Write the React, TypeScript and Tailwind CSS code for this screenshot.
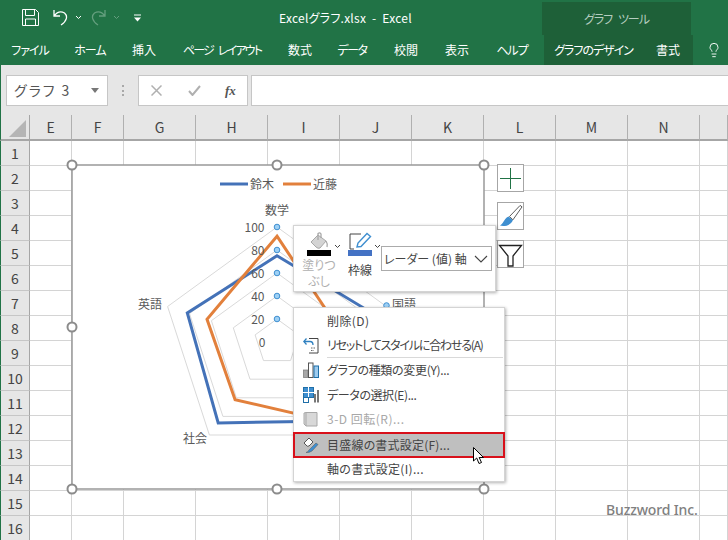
import { Lightbulb } from "lucide-react";

const columns = ["E", "F", "G", "H", "I", "J", "K", "L", "M", "N", ""];
const rows = Array.from({ length: 16 }, (_, i) => i + 1);
const tabs = [
  { label: "ファイル", width: "w-[60px]", track: "tracking-[-1px]" },
  { label: "ホーム", width: "w-[60px]", track: "tracking-[-1px]" },
  { label: "挿入", width: "w-[48px]", track: "" },
  { label: "ページ レイアウト", width: "w-[108px]", track: "tracking-[-1.8px] [word-spacing:4px]" },
  { label: "数式", width: "w-[48px]", track: "" },
  { label: "データ", width: "w-[56px]", track: "tracking-[-1.5px]" },
  { label: "校閲", width: "w-[52px]", track: "" },
  { label: "表示", width: "w-[50px]", track: "" },
  { label: "ヘルプ", width: "w-[60px]", track: "tracking-[-1px]" },
];

const CENTER_X = 277;
const CENTER_Y = 342;
const RADIUS = 115;

function pt(axis: number, v: number) {
  const a = (axis * 72 * Math.PI) / 180;
  return [CENTER_X + Math.sin(a) * RADIUS * v, CENTER_Y - Math.cos(a) * RADIUS * v];
}

function poly(vals: number[]) {
  return vals.map((v, i) => pt(i, v).map((n) => n.toFixed(1)).join(",")).join(" ");
}

function RadarChart() {
  const handles = [
    [72, 165], [277, 165], [484, 165],
    [72, 327], [484, 327],
    [72, 489], [277, 489], [484, 489],
  ];
  return (
    <svg viewBox="72 165 412 324" className="absolute left-[72px] top-[165px] w-[412px] h-[324px] overflow-visible">
      <rect x="72" y="165" width="412" height="324" fill="#fff" stroke="#999" strokeWidth="1.5" />
      {[0.2, 0.4, 0.6, 0.8, 1].map((v) => (
        <polygon key={v} points={poly([v, v, v, v, v])} fill="none" stroke="#d9d9d9" strokeWidth="1" />
      ))}
      <polygon points={poly([0.75, 0.85, 0.85, 0.87, 0.82])} fill="none" stroke="#4472b8" strokeWidth="3" />
      <polygon points={poly([0.92, 0.53, 0.87, 0.62, 0.64])} fill="none" stroke="#e2803c" strokeWidth="3" />
      {[1, 0.8, 0.6, 0.4, 0.2].map((v) => (
        <circle key={v} cx={CENTER_X} cy={CENTER_Y - RADIUS * v} r="2.8" fill="#9dd0f5" stroke="#3f8fd0" strokeWidth="1" />
      ))}
      <circle cx="386.5" cy="305.5" r="2.8" fill="#9dd0f5" stroke="#3f8fd0" strokeWidth="1" />
      <line x1="220" y1="184" x2="248" y2="184" stroke="#4472b8" strokeWidth="3" />
      <line x1="283" y1="184" x2="311" y2="184" stroke="#e2803c" strokeWidth="3" />
      <g fill="#595959" fontSize="12">
        <text x="250" y="188.5">鈴木</text>
        <text x="313" y="188.5">近藤</text>
        <text x="265" y="214.5">数学</text>
        <text x="138" y="309">英語</text>
        <text x="183" y="443">社会</text>
        <text x="392" y="309">国語</text>
        {[100, 80, 60, 40, 20, 0].map((n, i) => (
          <text key={n} x={n === 0 ? 265.5 : 264.5} y={231.5 + i * 23} textAnchor="end">{n}</text>
        ))}
      </g>
      {handles.map(([x, y]) => (
        <circle key={`${x}-${y}`} cx={x} cy={y} r="4.5" fill="#fff" stroke="#8c8c8c" strokeWidth="2" />
      ))}
    </svg>
  );
}

function SideButtons() {
  return (
    <div className="absolute left-[497px] top-[164px] flex flex-col gap-[10px]">
      <div className="w-[27px] h-[28px] bg-white border border-[#a6a6a6] flex items-center justify-center">
        <svg viewBox="0 0 21 21" className="w-[21px] h-[21px]"><path d="M10.5 0v21M0 10.5h21" stroke="#217346" strokeWidth="1" /></svg>
      </div>
      <div className="w-[27px] h-[28px] bg-white border border-[#a6a6a6] flex items-center justify-center">
        <svg viewBox="0 0 26 26" className="w-[26px] h-[26px]">
          <path d="M12 13.5 L23 2 L25 3.5 L15.5 17Z" fill="#fff" stroke="#555" strokeWidth="1" />
          <path d="M11 13.5 C8 14.5 7 17 5 20 C3.5 22 2.5 22.5 2 23 C6 24 12.5 23.5 15.5 17.5Z" fill="#3f8fd0" />
        </svg>
      </div>
      <div className="w-[27px] h-[28px] bg-white border border-[#a6a6a6] flex items-center justify-center">
        <svg viewBox="0 0 25 25" className="w-[25px] h-[25px]"><path d="M1.5 3.5H23.5L15 14V24H10V14Z" fill="none" stroke="#222" strokeWidth="1.3" /></svg>
      </div>
    </div>
  );
}

function Caret({ className }: { className?: string }) {
  return (
    <svg viewBox="0 0 7 5" className={`w-[7px] h-[5px] ${className ?? ""}`}><path d="M1 1l2.5 2.5L6 1" fill="none" stroke="#444" strokeWidth="1" /></svg>
  );
}

function MiniToolbar() {
  return (
    <div className="absolute left-[293px] top-[225px] w-[203px] h-[67px] bg-white border border-[#d4d4d4] shadow-[1px_1px_3px_rgba(0,0,0,0.3)] flex items-start pt-[6px] pl-[12px] text-[12px] text-[#444]">
      <div className="w-[26px] flex flex-col items-center">
        <svg viewBox="0 0 24 18" className="w-[24px] h-[18px]">
          <path d="M4 10 L11 3 L19 9 L13 16 Q11 17 9 15 Z" fill="#d4d4d4" stroke="#a8a8a8" strokeWidth="1" />
          <path d="M11 8 V1.5 Q13 0 14 2 V6 M19 9 Q21 12 20 15" fill="none" stroke="#a8a8a8" strokeWidth="1.3" />
        </svg>
        <div className="w-[24px] h-[6px] bg-black" />
        <div className="text-[#b0b0b0] leading-[16px] mt-[1px] w-[40px] text-center">塗りつ<br />ぶし</div>
      </div>
      <Caret className="mt-[12px] ml-[2px]" />
      <div className="w-[26px] ml-[6px] flex flex-col items-center">
        <svg viewBox="0 0 24 18" className="w-[24px] h-[18px]">
          <path d="M2 17V2H13M2 17H6" fill="none" stroke="#444" strokeWidth="1" />
          <path d="M9 15 L10 11 L19 1.5 L22.5 4.5 L13 14.5 Z" fill="#fff" stroke="#3f8fd0" strokeWidth="1.4" />
        </svg>
        <div className="w-[24px] h-[6px] bg-[#4472c4]" />
        <div className="leading-[16px] mt-[6px]">枠線</div>
      </div>
      <Caret className="mt-[12px] ml-[1px]" />
      <div className="mt-[14px] w-[111px] h-[25px] border border-[#ababab] flex items-center pl-[2px]">
        <span className="flex-1">レーダー (値) 軸</span>
        <svg viewBox="0 0 14 8" className="w-[14px] h-[8px] mr-[3px]"><path d="M1 1l6 6 6-6" fill="none" stroke="#444" strokeWidth="1.1" /></svg>
      </div>
    </div>
  );
}

function MenuItem({ label, icon, disabled, track }: { label: string; icon?: React.ReactNode; disabled?: boolean; track?: string }) {
  return (
    <div className={`h-[24px] flex items-center ${disabled ? "text-[#a8a8a8]" : "text-[#444]"}`}>
      <div className="w-[33px] flex justify-center shrink-0 pl-[1px]">{icon}</div>
      <span className={`whitespace-nowrap ${track ?? ""}`}>{label}</span>
    </div>
  );
}

function ContextMenu() {
  return (
    <div className="absolute left-[293px] top-[307px] w-[212px] h-[175px] bg-white border border-[#d4d4d4] shadow-[1px_1px_3px_rgba(0,0,0,0.3)] pt-[1px] text-[12px]">
      <MenuItem label="削除(D)" track="tracking-[0.4px]" />
      <MenuItem
        label="リセットしてスタイルに合わせる(A)"
        track="tracking-[-1.2px]"
        icon={
          <svg viewBox="0 0 16 17" className="w-[16px] h-[17px]">
            <path d="M6 1.5H15V16H6" fill="none" stroke="#444" />
            <path d="M1 4.5H7Q10 4.5 10 8" fill="none" stroke="#2f80c0" strokeWidth="1.3" />
            <path d="M3.5 1.5L.8 4.5L3.5 7.5" fill="none" stroke="#2f80c0" strokeWidth="1.3" />
            <path d="M8 11h5M8 13.5h3" stroke="#666" strokeDasharray="1.5 1" />
          </svg>
        }
      />
      <div className="h-px bg-[#d9d9d9] ml-[33px] mr-[1px]" />
      <MenuItem
        label="グラフの種類の変更(Y)..."
        track="tracking-[-0.3px]"
        icon={
          <svg viewBox="0 0 16 16" className="w-[16px] h-[16px]">
            <rect x="0.5" y="8" width="4.5" height="7.5" fill="#a8a8a8" stroke="#777" strokeWidth="0.7" />
            <rect x="5.5" y="1" width="4.5" height="14.5" fill="#fff" stroke="#555" />
            <rect x="11" y="4" width="4.5" height="11.5" fill="#9dcbee" stroke="#1f6fa8" />
          </svg>
        }
      />
      <div className="h-px" />
      <MenuItem
        label="データの選択(E)..."
        track="tracking-[-0.4px]"
        icon={
          <svg viewBox="0 0 16 16" className="w-[16px] h-[16px]">
            <rect x="0.5" y="0.5" width="10" height="10" fill="#3f8fd0" stroke="#1f6fa8" />
            <path d="M0 5.5H11M5.5 0V11" stroke="#fff" />
            <rect x="0.5" y="10.5" width="5" height="5" fill="#fff" stroke="#1f6fa8" />
            <rect x="11" y="7" width="2" height="8.5" fill="#777" />
            <rect x="14" y="3" width="2" height="12.5" fill="#777" />
          </svg>
        }
      />
      <MenuItem
        label="3-D 回転(R)..."
        track="tracking-[0.5px]"
        disabled
        icon={
          <svg viewBox="0 0 16 16" className="w-[16px] h-[16px]">
            <path d="M3 1.5H14V15H3L1 13V2Z" fill="#d8d8d8" stroke="#a8a8a8" />
            <path d="M3 1.5V15" stroke="#a8a8a8" />
          </svg>
        }
      />
      <div className="h-[26px] bg-[#bfbfbf] border-2 border-[#d8101a] flex items-center text-[#444] -mx-px mt-px">
        <div className="w-[32px] flex justify-center shrink-0">
          <svg viewBox="0 0 16 16" className="w-[16px] h-[16px]">
            <path d="M1 6L6 1L10 5L6 9Q4 10 3 8Z" fill="#fff" stroke="#555" />
            <path d="M6 13L13 6L15 7.5L9 14Q6 16 3 15.5Q5 15 6 13Z" fill="#3f8fd0" stroke="#555" strokeWidth="0.5" />
          </svg>
        </div>
        <span className="tracking-[0.2px]">目盛線の書式設定(F)...</span>
      </div>
      <div className="-mt-px">
        <MenuItem label="軸の書式設定(I)..." track="tracking-[0.3px]" />
      </div>
    </div>
  );
}

export default function App() {
  return (
    <div className="relative w-[728px] h-[540px] overflow-hidden bg-white font-['Noto_Sans_CJK_JP','Liberation_Sans',sans-serif] [font-feature-settings:'palt']">
      {/* title bar */}
      <div className="h-[35px] bg-[#217346] flex text-white text-[12px]">
        <div className="w-[279px] flex items-center pl-[22px]">
          <svg viewBox="0 0 17 17" className="w-[17px] h-[17px]">
            <path d="M.5.5H13.5L16.5 3.5V16.5H.5Z M3.5 .5V6.5H12.5V.5 M3.5 16.5V10H13.5V16.5" fill="none" stroke="#fff" />
          </svg>
          <svg viewBox="0 0 17 17" className="w-[17px] h-[17px] ml-[13px]">
            <path d="M2 1V7H8 M2 7C5 3 9 2 12.5 4C16 7 15 12 9 16" fill="none" stroke="#fff" strokeWidth="1.3" />
          </svg>
          <Caret className="ml-[6px] [&>path]:stroke-white" />
          <svg viewBox="0 0 17 17" className="w-[17px] h-[17px] ml-[8px] opacity-40">
            <path d="M15 1V7H9 M15 7C12 3 8 2 4.5 4C1 7 2 12 8 16" fill="none" stroke="#c8e0d2" strokeWidth="1.3" />
          </svg>
          <Caret className="ml-[6px] opacity-30 [&>path]:stroke-white" />
          <svg viewBox="0 0 7 8" className="w-[7px] h-[8px] ml-[14px]">
            <path d="M0 1H7" stroke="#fff" /><path d="M0 3.5H7L3.5 7.5Z" fill="#fff" />
          </svg>
        </div>
        <div className="w-[263px] flex items-center whitespace-pre tracking-[0.25px]">Excelグラフ.xlsx  -  Excel</div>
        <div className="w-[149px] mt-[2px] bg-[#1e6038] flex items-center justify-center text-[#b4cdbf] tracking-[-1px] [word-spacing:4px]">グラフ ツール</div>
      </div>

      {/* ribbon tabs */}
      <div className="h-[30px] bg-[#217346] flex items-center text-white text-[12px]">
        {tabs.map((t) => (
          <div key={t.label} className={`${t.width} ${t.track} text-center whitespace-pre`}>{t.label}</div>
        ))}
        <div className="w-[149px] ml-[2px] h-full pb-[1px] bg-[#1e6038] flex items-center">
          <span className="w-[99px] text-center tracking-[-1px]">グラフのデザイン</span>
          <span className="w-[50px] text-center">書式</span>
        </div>
        <Lightbulb className="w-[16px] h-[18px] ml-[13px]" strokeWidth={1.4} />
      </div>

      {/* formula bar */}
      <div className="h-[50px] bg-[#e6e6e6] flex items-start pt-[10px] border-l border-[#217346]">
        <div className="ml-[5px] w-[102px] h-[31px] bg-white border border-[#c6c6c6] flex items-center pl-[7px] pr-[8px] text-[14px] text-[#555] tracking-[2px]">
          <span className="flex-1">グラフ 3</span>
          <svg viewBox="0 0 8 5" className="w-[8px] h-[5px]"><path d="M0 0H8L4 5Z" fill="#777" /></svg>
        </div>
        <div className="w-[2px] h-[11px] mt-[10px] ml-[14px] border-l-2 border-dotted border-[#a8a8a8]" />
        <div className="ml-[14px] w-[110px] h-[31px] bg-white border border-[#c6c6c6] flex items-center">
          <svg viewBox="0 0 11 11" className="w-[11px] h-[11px] ml-[12px]"><path d="M.5.5l10 10M10.5.5l-10 10" stroke="#b0b0b0" strokeWidth="1.5" /></svg>
          <svg viewBox="0 0 13 11" className="w-[13px] h-[11px] ml-[26px]"><path d="M1 6l3.5 4L12 1" fill="none" stroke="#b0b0b0" strokeWidth="2" /></svg>
          <span className="ml-[24px] text-[13px] italic font-bold text-[#555] font-['Liberation_Serif',serif]">fx</span>
        </div>
        <div className="ml-[3px] flex-1 h-[31px] bg-white border border-[#c6c6c6] border-r-0" />
      </div>

      {/* sheet */}
      <div className="grid grid-cols-[30px_42px_52px_72px_72px_72px_72px_72px_72px_72px_72px_28px] grid-rows-[26px] auto-rows-[25px] text-[14px] text-[#444]">
        <div className="relative bg-[#e6e6e6] border-l border-l-[#217346] border-r border-r-[#a6a6a6] border-b-2 border-b-[#a6a6a6]">
          <div className="absolute left-[8px] top-[5px] w-0 h-0 border-l-[17px] border-l-transparent border-b-[17px] border-b-[#b5b5b5]" />
        </div>
        {columns.map((c, i) => (
          <div key={i} className="bg-[#e6e6e6] border-r border-b-2 border-r-[#b0b0b0] border-b-[#a6a6a6] flex items-center justify-center">{c}</div>
        ))}
        {rows.map((r) => (
          <div key={r} className="contents">
            <div className="bg-[#e6e6e6] border-l border-l-[#217346] border-r border-b border-r-[#a6a6a6] border-b-[#c6c6c6] flex items-center justify-center">{r}</div>
            {columns.map((c, i) => (
              <div key={i} className="border-r border-b border-[#d4d4d4]" />
            ))}
          </div>
        ))}
      </div>

      <RadarChart />
      <SideButtons />
      <MiniToolbar />
      <ContextMenu />

      {/* mouse cursor */}
      <svg viewBox="0 0 12 18" className="absolute left-[473px] top-[447px] w-[12px] h-[18px]">
        <path d="M.5.5V14L3.7 11L6 16.5L8.5 15.5L6.2 10.5H10.5Z" fill="#fff" stroke="#000" strokeWidth="1" />
      </svg>

      <div className="absolute left-[606px] top-[500px] text-[14px] font-medium text-[#808080] leading-[20px] tracking-[-0.15px] font-['Noto_Sans',sans-serif]">Buzzword Inc.</div>
    </div>
  );
}
